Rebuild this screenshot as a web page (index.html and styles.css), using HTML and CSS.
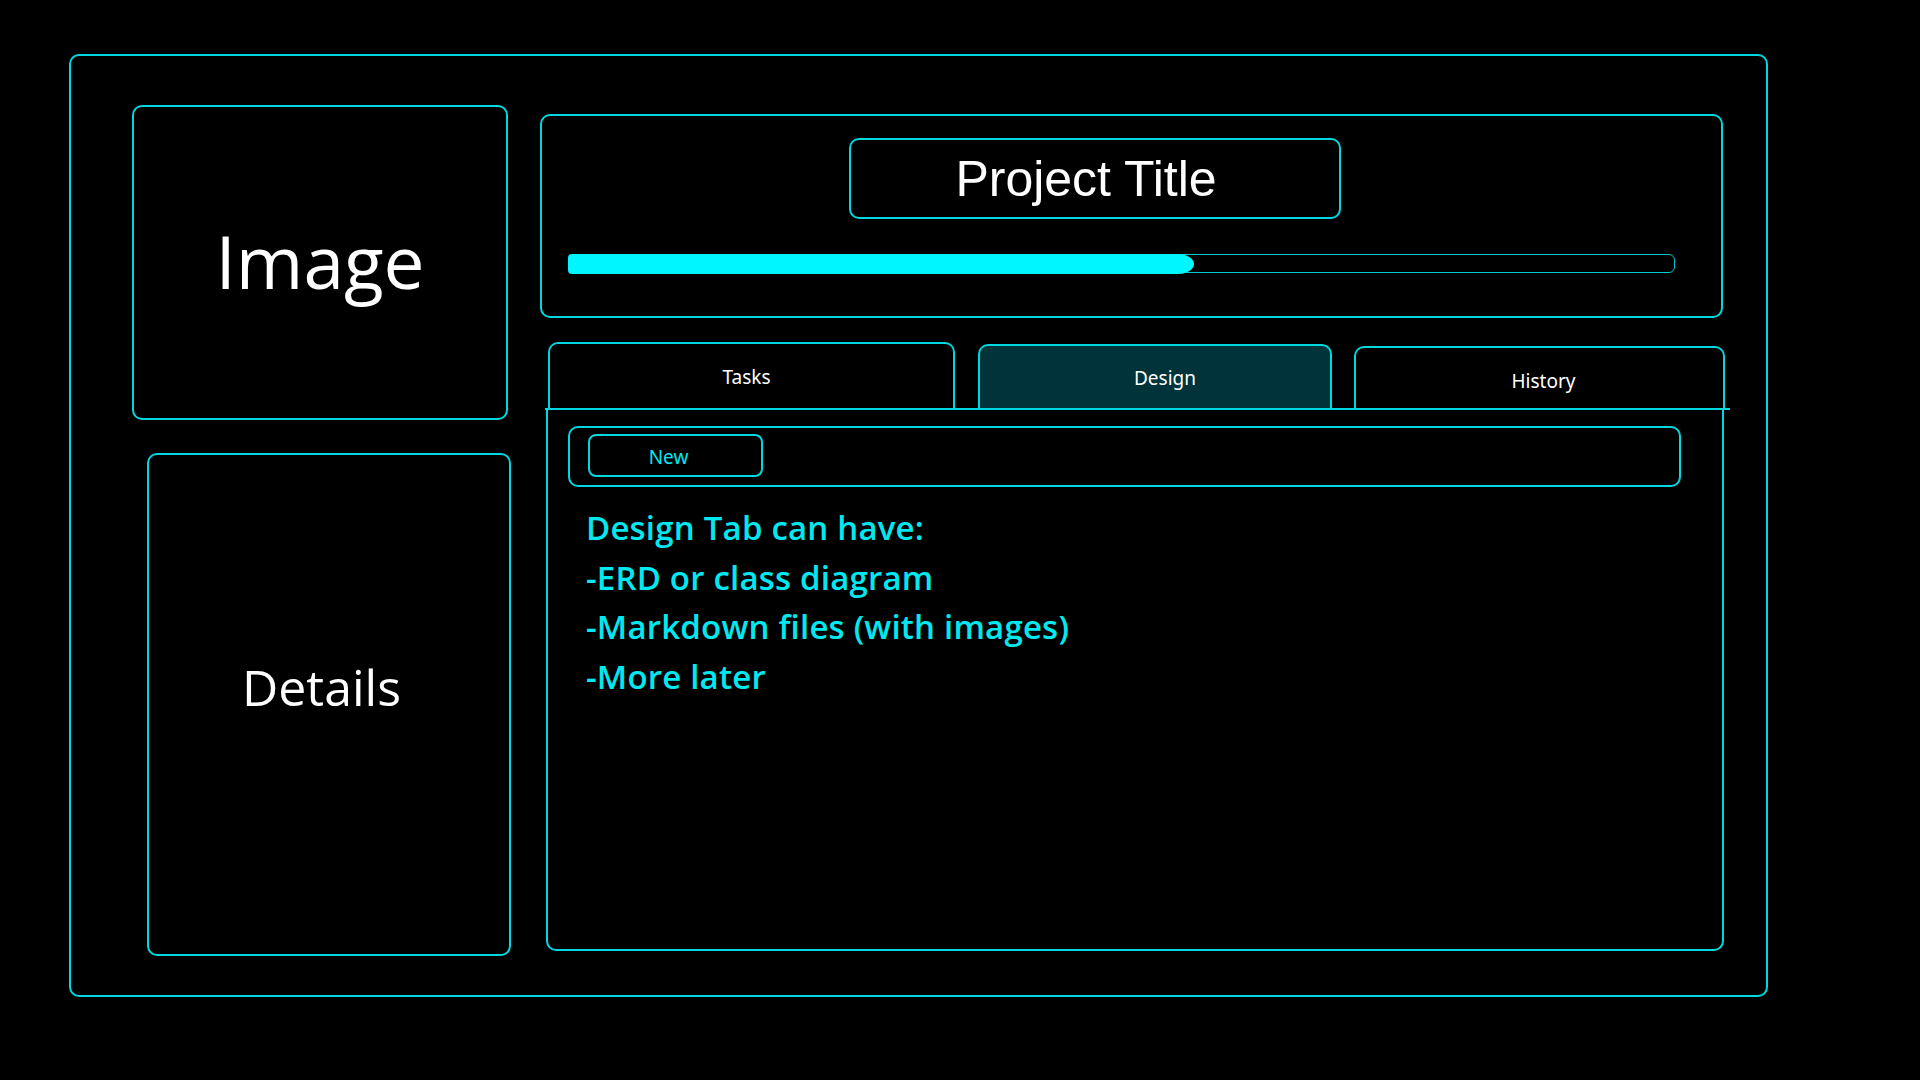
FILE: index.html
```html
<!DOCTYPE html>
<html lang="en">
<head>
<meta charset="utf-8">
<title>Project</title>
<link rel="stylesheet" href="styles.css">
</head>
<body>
<div class="frame">
  <div class="left-col">
    <div class="image-box">Image</div>
    <div class="details-box">Details</div>
  </div>
  <div class="right-col">
    <div class="header">
      <div class="title">Project Title</div>
      <div class="track"><div class="fill" style="width:56.7%"></div></div>
    </div>
    <div class="tabs">
      <div class="tab tab-tasks">Tasks</div>
      <div class="tab tab-design">Design</div>
      <div class="tab tab-history">History</div>
    </div>
    <div class="panel">
      <div class="toolbar">
        <div class="new-btn">New</div>
      </div>
      <div class="notes">
        <div>Design Tab can have:</div>
        <div>-ERD or class diagram</div>
        <div>-Markdown files (with images)</div>
        <div>-More later</div>
      </div>
    </div>
  </div>
</div>
</body>
</html>
```
FILE: styles.css
```css
* { box-sizing: border-box; }
html, body { margin: 0; padding: 0; }
body {
  background: #000;
  width: 1920px;
  height: 1080px;
  overflow: hidden;
  font-family: "Open Sans", "Noto Sans", sans-serif;
  color: #fff;
}
.frame {
  margin: 54px 0 0 69px;
  width: 1699px;
  height: 943px;
  border: 2px solid #00d8e0;
  border-radius: 10px;
  display: flex;
}
.left-col {
  width: 469px;
  display: flex;
  flex-direction: column;
  flex: none;
}
.image-box {
  margin: 49px 0 0 61px;
  width: 376px;
  height: 315px;
  border: 2px solid #00d8e0;
  border-radius: 10px;
  display: flex;
  align-items: center;
  justify-content: center;
  font-family: "Open Sans", sans-serif;
  font-size: 73px;
  padding-bottom: 4px;
}
.details-box {
  margin: 33px 0 0 76px;
  width: 364px;
  height: 503px;
  border: 2px solid #00d8e0;
  border-radius: 10px;
  display: flex;
  align-items: center;
  justify-content: center;
  font-family: "Open Sans", sans-serif;
  font-size: 50px;
  padding: 0 15px 36px 0;
}
.right-col {
  width: 1195px;
  flex: none;
  display: flex;
  flex-direction: column;
}
.header {
  margin-top: 58px;
  width: 1183px;
  height: 204px;
  border: 2px solid #00d8e0;
  border-radius: 10px;
  display: flex;
  flex-direction: column;
}
.title {
  margin: 22px 0 0 307px;
  width: 492px;
  height: 81px;
  border: 2px solid #00d8e0;
  border-radius: 10px;
  display: flex;
  align-items: center;
  justify-content: center;
  padding-right: 18px;
  font-family: "Liberation Sans", Arial, sans-serif;
  font-size: 50px;
}
.track {
  margin: 35px 0 0 26px;
  width: 1107px;
  height: 19px;
  border: 1.5px solid #00c8d0;
  border-radius: 6px;
  display: flex;
}
.fill {
  margin: -1.5px;
  height: calc(100% + 3px);
  background: #00f6ff;
  border-radius: 4px 16px 16px 4px / 4px 50% 50% 4px;
}
.tabs {
  margin: 24px 0 0 5px;
  width: 1185px;
  height: 68px;
  border-bottom: 2px solid #00d8e0;
  display: flex;
  align-items: flex-end;
}
.tab {
  border: 2px solid #00d8e0;
  border-bottom: none;
  border-radius: 10px 10px 0 0;
  display: flex;
  align-items: center;
  justify-content: center;
  font-family: "Noto Sans", sans-serif;
  font-size: 19px;
  color: #fff;
}
.tab-tasks {
  margin-left: 3px;
  width: 407px;
  height: 66px;
  padding: 2px 10px 0 0;
}
.tab-design {
  margin-left: 23px;
  width: 354px;
  height: 64px;
  background: #00333a;
  padding: 2px 0 0 20px;
}
.tab-history {
  margin-left: 22px;
  width: 371px;
  height: 62px;
  padding: 6px 0 0 8px;
}
.panel {
  margin-left: 6px;
  width: 1178px;
  height: 541px;
  border: 2px solid #00d8e0;
  border-top: none;
  border-radius: 0 0 10px 10px;
  display: flex;
  flex-direction: column;
}
.toolbar {
  margin: 16px 0 0 20px;
  width: 1113px;
  height: 61px;
  border: 2px solid #00d8e0;
  border-radius: 10px;
  display: flex;
  align-items: flex-start;
}
.new-btn {
  margin: 6px 0 0 18px;
  width: 175px;
  height: 43px;
  border: 2px solid #00d8e0;
  border-radius: 8px;
  display: flex;
  align-items: center;
  justify-content: center;
  padding: 2px 14px 0 0;
  font-family: "Noto Sans", sans-serif;
  font-size: 19px;
  color: #00e8f0;
}
.notes {
  margin: 16px 0 0 38px;
  font-family: "Open Sans", "Noto Sans", sans-serif;
  font-weight: 600;
  font-size: 33px;
  letter-spacing: 0.2px;
  line-height: 49.5px;
  color: #00e8f0;
}
```
